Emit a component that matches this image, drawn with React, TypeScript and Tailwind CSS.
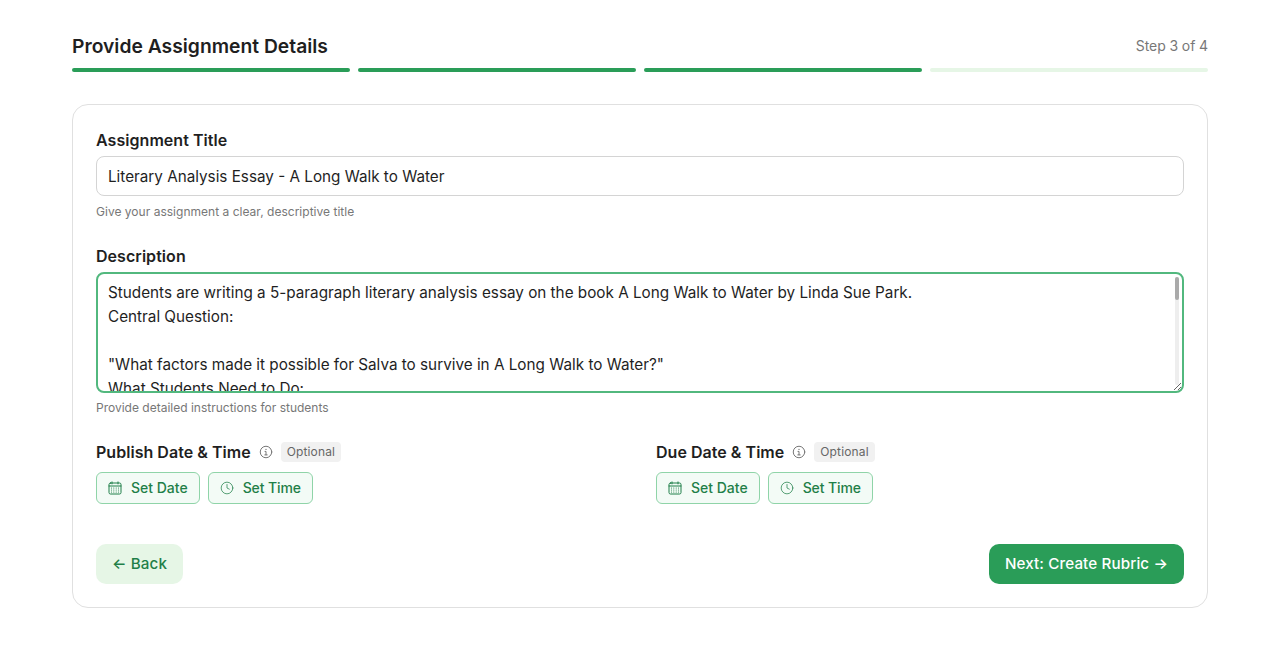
import { Clock } from 'lucide-react';

const DESCRIPTION = `Students are writing a 5-paragraph literary analysis essay on the book A Long Walk to Water by Linda Sue Park.
Central Question:

"What factors made it possible for Salva to survive in A Long Walk to Water?"
What Students Need to Do:
Read the book and take notes on the challenges Salva faces.
Write an introduction with a clear thesis statement.
Support each body paragraph with evidence from the text.`;

// calendar with a grid of dots, lucide's has too few
function CalendarGrid() {
  return (
    <svg width="14" height="14" viewBox="0 0 14 14" fill="none" stroke="currentColor" strokeWidth="1" strokeLinecap="round">
      <rect x="1" y="2" width="12" height="11" rx="1.5" />
      <path d="M1 5h12M4 .9v2M10 .9v2" />
      <path d="M3.5 7h.01M5.8 7h.01M8.2 7h.01M10.5 7h.01M3.5 9h.01M5.8 9h.01M8.2 9h.01M10.5 9h.01M3.5 11h.01M5.8 11h.01M8.2 11h.01M10.5 11h.01" strokeWidth="1.1" />
    </svg>
  );
}

function InfoMark() {
  return (
    <svg width="14" height="14" viewBox="0 0 14 14" fill="none" stroke="currentColor" strokeWidth="1" strokeLinecap="round">
      <circle cx="7" cy="7" r="5.75" />
      <path d="M7 4.4h.01" strokeWidth="1.3" />
      <path d="M6 6.4h1v3.4M5.8 9.9h2.4" />
    </svg>
  );
}

function DateField({ label }: { label: string }) {
  return (
    <div>
      <div className="flex h-5 items-center">
        <span className="text-base leading-5 font-semibold tracking-[0.03px] text-[#1f1f1f]">{label}</span>
        <span className="ml-2 text-[#777]">
          <InfoMark />
        </span>
        <span className="ml-2 rounded bg-[#f1f1f1] px-1.5 text-xs leading-5 tracking-[0.15px] text-[#666]">Optional</span>
      </div>
      <div className="mt-2.5 flex gap-2">
        <button type="button" className="flex h-8 items-center gap-[9px] rounded-md border border-[#8fd4a8] bg-[#f3fbf6] px-[11px] text-sm font-medium text-[#1f7f48]">
          <CalendarGrid />
          Set Date
        </button>
        <button type="button" className="flex h-8 items-center gap-[9px] rounded-md border border-[#8fd4a8] bg-[#f3fbf6] px-[11px] text-sm font-medium tracking-[-0.1px] text-[#1f7f48]">
          <Clock size={14} strokeWidth={1.25} />
          Set Time
        </button>
      </div>
    </div>
  );
}

export default function App() {
  return (
    <div className="min-h-[656px] bg-white pt-[36px] pl-[72px] font-['Inter',sans-serif] text-[#1f1f1f]">
      <div className="w-[1136px]">
        {/* Header */}
        <div className="flex items-center justify-between">
          <h1 className="text-[19.3px] leading-5 font-semibold">Provide Assignment Details</h1>
          <span className="text-sm leading-5 tracking-[-0.1px] text-[#777]">Step 3 of 4</span>
        </div>
        <div className="mt-[12px] flex gap-2">
          <div className="h-1 flex-1 rounded-sm bg-[#2a9d58]" />
          <div className="h-1 flex-1 rounded-sm bg-[#2a9d58]" />
          <div className="h-1 flex-1 rounded-sm bg-[#2a9d58]" />
          <div className="h-1 flex-1 rounded-sm bg-[#e6f6e6]" />
        </div>

        {/* Card */}
        <div className="mt-8 rounded-2xl border border-[#e0e0e0] px-[23px] pt-6 pb-[23px]">
          <label className="block text-base leading-[22px] font-semibold tracking-[0.05px]">Assignment Title</label>
          <input
            readOnly
            value="Literary Analysis Essay - A Long Walk to Water"
            className="mt-[5px] block h-10 w-full rounded-lg border border-[#d4d4d4] px-[11px] text-[15.25px] text-[#1f1f1f] outline-none"
          />
          <p className="mt-2 text-xs leading-4 tracking-[0.02px] text-[#777]">Give your assignment a clear, descriptive title</p>

          <label className="mt-[25px] block text-base leading-[22px] font-semibold tracking-[0.05px]">Description</label>
          <div className="relative mt-[5px]">
            <textarea
              readOnly
              value={DESCRIPTION}
              className="block h-[121px] w-full rounded-lg border-2 border-[#52b87e] px-[10px] py-[7px] text-[15.27px] leading-6 text-[#1f1f1f] outline-none"
            />
            {/* scrollbar, headless chrome hides the real one */}
            <div className="absolute top-[5px] right-[5px] bottom-[8px] w-1 rounded-full bg-[#eeeeee]">
              <div className="h-[23px] rounded-full bg-[#aaaaaa]" />
            </div>
          </div>
          <p className="mt-[7px] text-xs leading-4 text-[#777]">Provide detailed instructions for students</p>

          <div className="mt-[26px] grid grid-cols-2 gap-8">
            <DateField label="Publish Date & Time" />
            <DateField label="Due Date & Time" />
          </div>

          <div className="mt-10 flex justify-between">
            <button type="button" className="h-10 rounded-[10px] bg-[#e6f6e6] px-4 text-[15.2px] font-[450] tracking-[0.12px] text-[#1f7f48]">
              ← Back
            </button>
            <button type="button" className="h-10 rounded-[10px] bg-[#2a9d58] px-4 text-[15.2px] font-[450] tracking-[0.12px] text-white">
              Next: Create Rubric →
            </button>
          </div>
        </div>
      </div>
    </div>
  );
}
